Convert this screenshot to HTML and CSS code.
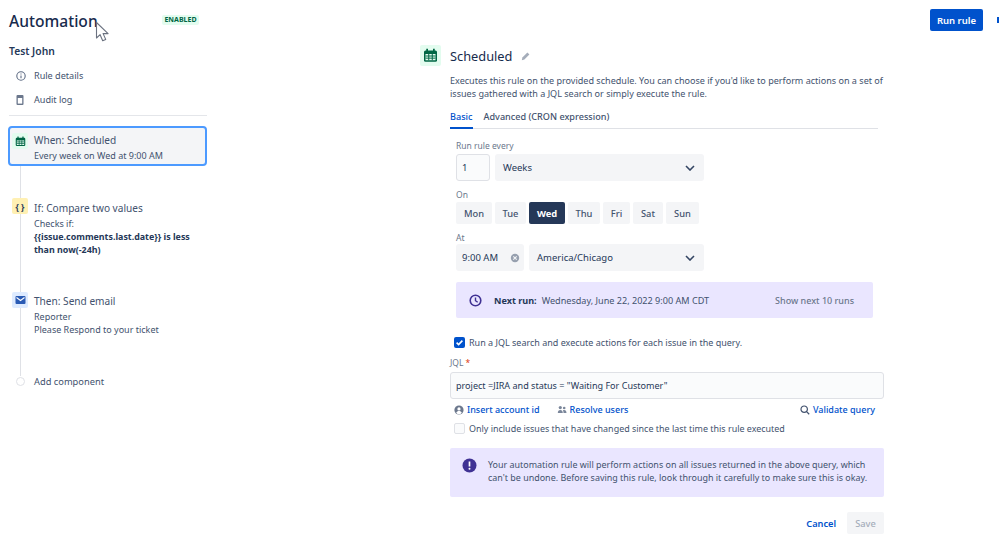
FILE: index.html
```html
<!DOCTYPE html>
<html lang="en">
<head>
<meta charset="utf-8">
<title>Automation</title>
<link rel="stylesheet" href="styles.css">
</head>
<body>
<div class="page">
  <header class="topbar">
    <h1 class="title">Automation</h1>
    <span class="lozenge">ENABLED</span>
    <button class="btn-primary">Run rule</button>
    <span class="edge-mark"></span>
  </header>
  <svg class="cursor" width="16" height="22" viewBox="0 0 16 22"><path d="M1.500 1.500V17l3.600-3.300 2.600 6 3-1.300-2.600-5.800h5z" fill="#fff" stroke="#6b7280" stroke-width="1.100" stroke-linejoin="round"/></svg>
  <div class="content">
    <aside class="sidebar">
      <div class="owner">Test John</div>
      <div class="nav-item">
        <svg class="nav-icon" width="12" height="12" viewBox="0 0 12 12"><circle cx="6" cy="6" r="4.200" fill="none" stroke="#5e6c84" stroke-width="1.100"/><path d="M6 5.400v2.800M6 3.500v1" stroke="#5e6c84" stroke-width="1.100"/></svg>
        Rule details
      </div>
      <div class="nav-item">
        <svg class="nav-icon" width="12" height="12" viewBox="0 0 12 12"><rect x="1.500" y="1" width="7" height="10" rx="1" fill="#6b778c"/><rect x="2.800" y="4" width="4.400" height="5.600" fill="#fff"/></svg>
        Audit log
      </div>
      <hr class="divider">
      <div class="flow">
        <div class="flow-line"></div>
        <div class="step step-selected">
          <span class="step-icon icon-green">
            <svg width="11" height="11" viewBox="0 0 12 12"><use href="#cal"/></svg>
          </span>
          <div class="step-body">
            <div class="step-title">When: Scheduled</div>
            <div class="step-text">Every week on Wed at 9:00 AM</div>
          </div>
        </div>
        <div class="step step-if">
          <span class="step-icon icon-yellow">{ }</span>
          <div class="step-body">
            <div class="step-title">If: Compare two values</div>
            <div class="step-text">Checks if:<br><b>{{issue.comments.last.date}} is less than now(-24h)</b></div>
          </div>
        </div>
        <div class="step step-then">
          <span class="step-icon icon-blue">
            <svg width="11" height="10" viewBox="0 0 11 10"><rect x=".5" y="1" width="10" height="8" rx="1" fill="#2a5bb5"/><path d="M1.500 2.500l4 3 4-3" fill="none" stroke="#fff" stroke-width="1.100"/></svg>
          </span>
          <div class="step-body">
            <div class="step-title">Then: Send email</div>
            <div class="step-text">Reporter<br>Please Respond to your ticket</div>
          </div>
        </div>
        <div class="step step-add">
          <span class="add-dot"></span>
          <div class="add-label">Add component</div>
        </div>
      </div>
    </aside>

    <main class="panel">
      <div class="panel-head">
        <span class="panel-icon">
          <svg width="15" height="15" viewBox="0 0 12 12"><defs><g id="cal"><rect x=".8" y="2" width="10.400" height="9" rx="1.200" fill="#006644"/><rect x="2.600" y=".6" width="1.400" height="2.400" fill="#006644"/><rect x="8" y=".6" width="1.400" height="2.400" fill="#006644"/><rect x="2" y="4.800" width="8" height="5" fill="#e3fcef"/><path d="M2 6.400h8M2 8.100h8M4.600 4.800v5M7.400 4.800v5" stroke="#006644" stroke-width=".8"/></g></defs><use href="#cal"/></svg>
        </span>
        <h2 class="panel-title">Scheduled</h2>
        <svg class="pencil" width="10" height="10" viewBox="0 0 10 10"><path d="M.8 9.200l.6-2.600 5-5 2 2-5 5z" fill="#a5adba"/></svg>
      </div>
      <div class="panel-body">
        <p class="desc">Executes this rule on the provided schedule. You can choose if you'd like to perform actions on a set of issues gathered with a JQL search or simply execute the rule.</p>
        <nav class="tabs">
          <span class="tab tab-active">Basic</span>
          <span class="tab">Advanced (CRON expression)</span>
        </nav>
        <section class="schedule">
          <label class="field-label">Run rule every</label>
          <div class="row">
            <div class="input num">1</div>
            <div class="select weeks">Weeks<svg class="chev" width="10" height="6" viewBox="0 0 10 6"><path d="M1 1l4 4 4-4" fill="none" stroke="#344563" stroke-width="1.600"/></svg></div>
          </div>
          <label class="field-label label-on">On</label>
          <div class="days">
            <span class="day d-mon">Mon</span>
            <span class="day d-tue">Tue</span>
            <span class="day day-on d-wed">Wed</span>
            <span class="day d-thu">Thu</span>
            <span class="day d-fri">Fri</span>
            <span class="day d-sat">Sat</span>
            <span class="day d-sun">Sun</span>
          </div>
          <label class="field-label label-at">At</label>
          <div class="row">
            <div class="select time">9:00 AM<svg class="clear" width="10" height="10" viewBox="0 0 10 10"><circle cx="5" cy="5" r="4.200" fill="#97a0af"/><path d="M3.300 3.300l3.400 3.400M6.700 3.300L3.300 6.700" stroke="#f4f5f7" stroke-width="1.100"/></svg></div>
            <div class="select zone">America/Chicago<svg class="chev" width="10" height="6" viewBox="0 0 10 6"><path d="M1 1l4 4 4-4" fill="none" stroke="#344563" stroke-width="1.600"/></svg></div>
          </div>
          <div class="next-run">
            <svg class="clock" width="13" height="13" viewBox="0 0 13 13"><circle cx="6.500" cy="6.500" r="5.300" fill="none" stroke="#403294" stroke-width="1.600"/><path d="M6.500 3.500v3.200l2.200 1.600" fill="none" stroke="#403294" stroke-width="1.400"/></svg>
            <b class="next-label">Next run:</b>
            <span class="next-date">Wednesday, June 22, 2022 9:00 AM CDT</span>
            <span class="next-more">Show next 10 runs</span>
          </div>
        </section>
        <div class="check-row check-jql">
          <span class="check check-on"><svg width="11" height="11" viewBox="0 0 11 11"><path d="M2.600 5.600l2 2 3.800-4" fill="none" stroke="#fff" stroke-width="1.600"/></svg></span>
          Run a JQL search and execute actions for each issue in the query.
        </div>
        <label class="jql-label">JQL<span class="req">*</span></label>
        <div class="jql-input">project =JIRA and status = "Waiting For Customer"</div>
        <div class="links">
          <a class="link"><svg width="10" height="10" viewBox="0 0 10 10"><circle cx="5" cy="5" r="4.600" fill="#6b778c"/><circle cx="5" cy="3.900" r="1.600" fill="#fff"/><path d="M2.200 8c.5-1.500 1.500-2 2.800-2s2.300.5 2.800 2A4 4 0 0 1 2.200 8z" fill="#fff"/></svg>Insert account id</a>
          <a class="link link-resolve"><svg width="10" height="9" viewBox="0 0 10 9"><circle cx="3.300" cy="2.600" r="1.600" fill="#7a869a"/><circle cx="7.200" cy="3" r="1.300" fill="#7a869a"/><path d="M.8 8c0-2 1-3 2.500-3s2.500 1 2.500 3zM6.500 8c0-1.300-.2-2-.6-2.700.4-.3.9-.4 1.300-.4 1.400 0 2.300 1 2.300 3.100z" fill="#7a869a"/></svg>Resolve users</a>
          <a class="link link-validate"><svg width="10" height="10" viewBox="0 0 10 10"><circle cx="4.200" cy="4.200" r="3.200" fill="none" stroke="#42526e" stroke-width="1.200"/><path d="M6.600 6.600l2.600 2.600" stroke="#42526e" stroke-width="1.300"/></svg>Validate query</a>
        </div>
        <div class="check-row check-changed">
          <span class="check"></span>
          Only include issues that have changed since the last time this rule executed
        </div>
        <div class="warning">
          <svg class="warn-icon" width="15" height="15" viewBox="0 0 15 15"><circle cx="7.500" cy="7.500" r="7" fill="#403294"/><path d="M7.500 3.500v5" stroke="#fff" stroke-width="1.700"/><circle cx="7.500" cy="10.800" r="1" fill="#fff"/></svg>
          <p class="warn-text">Your automation rule will perform actions on all issues returned in the above query, which can't be undone. Before saving this rule, look through it carefully to make sure this is okay.</p>
        </div>
        <div class="actions">
          <a class="cancel">Cancel</a>
          <button class="save" disabled>Save</button>
        </div>
      </div>
    </main>
  </div>
</div>
</body>
</html>
```
FILE: styles.css
```css
* { box-sizing: border-box; }
html, body { margin: 0; height: 100%; overflow: hidden; background: #fff; }
body { font-family: "Noto Sans", "Open Sans", sans-serif; font-size: 9.5px; color: #42526e; }
.page { position: relative; width: 999px; height: 554px; overflow: hidden; }
p, h1, h2 { margin: 0; font-weight: 400; }

.topbar { display: flex; align-items: center; height: 40px; padding: 0 0 0 9px; }
.title { font-size: 15.600px; font-weight: 500; color: #172b4d; width: 153px; line-height: 24px; margin-top: 2px; }
.lozenge { width: 37px; height: 10px; border-radius: 2px; background: #e3fcef; color: #006644; font-size: 7px; font-weight: 700; line-height: 10px; text-align: center; }
.btn-primary { margin-left: auto; width: 53px; height: 22px; padding: 0; border: 0; border-radius: 2px; background: #0052cc; color: #fff; font: 600 9.500px "Noto Sans", sans-serif; }
.edge-mark { width: 2px; height: 6px; margin-left: 14px; background: #0052cc; }
.cursor { position: absolute; left: 95px; top: 21px; }

.content { display: flex; }
.sidebar { width: 207px; margin-left: 8px; flex: none; }
.owner { padding: 5px 0 0 1px; height: 24px; color: #253858; font-size: 10.300px; font-weight: 600; line-height: 13px; }
.nav-item { display: flex; align-items: center; height: 24px; padding-left: 7px; line-height: 24px; font-size: 9.100px; }
.nav-icon { margin-right: 7px; flex: none; }
.divider { height: 1px; margin: 3px 0 10px 1px; width: 198px; border: 0; background: #e4e6ea; }

.flow { position: relative; width: 199px; }
.flow-line { position: absolute; left: 12px; top: 20px; width: 1px; height: 230px; background: #dfe1e6; }
.step { position: relative; display: flex; padding-left: 4px; }
.step-selected { height: 40px; border: 2px solid #4c9aff; border-radius: 4px; background: #f4f5f7; padding: 5px 0 0 2px; }
.step-if { margin-top: 32px; height: 94px; }
.step-then { height: 81px; }
.step-add { align-items: center; height: 16px; padding-left: 8px; }
.step-icon { display: flex; align-items: center; justify-content: center; width: 16px; height: 16px; flex: none; border-radius: 2px; margin-right: 6px; color: #253858; font-size: 8.500px; font-weight: 700; }
.icon-green { background: #e3fcef; }
.icon-yellow { background: #fff0b3; }
.icon-blue { background: #deebff; }
.step-title { font-size: 10.100px; line-height: 13px; margin-bottom: 2px; padding-top: 1px; }
.step-if .step-title { padding-top: 4px; }
.step-then .step-title { padding-top: 3px; }
.step-text { font-size: 9px; line-height: 13px; width: 165px; }
.step-text b { color: #253858; font-size: 8.900px; font-weight: 700; }
.add-dot { width: 9px; height: 9px; margin-right: 9px; border: 1px solid #dfe1e6; border-radius: 50%; background: #fff; flex: none; }
.add-label { font-size: 9.300px; }

.panel { width: 464px; margin-left: 205px; flex: none; margin-top: 5px; }
.panel-head { display: flex; align-items: center; height: 21px; }
.panel-icon { display: flex; align-items: center; justify-content: center; width: 21px; height: 21px; border-radius: 2px; background: #e3fcef; margin-right: 9px; }
.panel-title { font-size: 12.800px; color: #172b4d; line-height: 21px; padding-top: 1px; }
.pencil { margin-left: 9px; }
.panel-body { padding-left: 30px; }
.desc { margin-top: 8px; font-size: 9.050px; line-height: 13px; }
.tabs { display: flex; width: 428px; height: 21px; margin-top: 8px; border-bottom: 1px solid #dfe1e6; gap: 11px; }
.tab { height: 21px; font-size: 9.100px; font-weight: 500; line-height: 17px; }
.tab-active { color: #0052cc; border-bottom: 2px solid #0052cc; }
.schedule { padding: 11px 0 0 6px; }
.field-label { display: block; font-size: 8.500px; line-height: 12px; color: #6b778c; }
.row { display: flex; gap: 5px; margin-top: 2px; }
.input, .select { display: flex; align-items: center; height: 27px; border-radius: 3px; font-size: 9.500px; color: #253858; }
.input { width: 34px; padding-left: 5px; border: 1.500px solid #dfe1e6; background: #fafbfc; }
.select { justify-content: space-between; background: #f4f5f7; padding: 0 9px 0 8px; }
.weeks { width: 209px; }
.time { width: 68px; padding: 0 4px 0 6px; }
.zone { width: 175px; }
.label-on { margin-top: 8px; }
.days { display: flex; gap: 3px; margin-top: 1px; width: 243px; }
.day { display: flex; align-items: center; justify-content: center; height: 22px; border-radius: 2px; background: #f4f5f7; font-size: 9.300px; font-weight: 500; color: #42526e; }
.d-mon { width: 36px; }
.d-tue { width: 31px; }
.d-wed { width: 36px; }
.d-thu { width: 32px; }
.d-fri { width: 27px; }
.d-sat { width: 30px; }
.d-sun { width: 33px; }
.day-on { background: #253858; color: #fff; font-weight: 700; }
.label-at { margin-top: 8px; }
.label-at + .row { margin-top: 0; }
.next-run { display: flex; align-items: center; width: 417px; height: 36px; margin-top: 11px; padding: 0 19px 0 13px; border-radius: 2px; background: #eae6ff; font-size: 9.100px; }
.clock { margin-right: 12px; }
.next-label { color: #253858; margin-right: 5px; }
.next-more { margin-left: auto; color: #6b778c; font-weight: 500; font-size: 9px; }
.check-row { display: flex; align-items: center; font-size: 9px; }
.check { display: flex; width: 11px; height: 11px; flex: none; border-radius: 2px; border: 1px solid #dfe1e6; background: #fafbfc; margin-right: 4px; }
.check-on { border: 0; background: #0052cc; }
.check-jql { padding-left: 4px; height: 12px; margin-top: 18px; }
.jql-label { display: block; margin-top: 9px; height: 12px; font-size: 8.500px; line-height: 12px; color: #6b778c; }
.req { color: #de350b; margin-left: 2px; }
.jql-input { display: flex; align-items: center; width: 434px; height: 27px; margin-top: 3px; padding-left: 5px; border: 1.500px solid #dfe1e6; border-radius: 3px; background: #fafbfc; font-size: 9.050px; color: #253858; }
.links { display: flex; align-items: center; width: 425px; height: 13px; margin-top: 4px; padding-left: 4px; }
.link { display: flex; align-items: center; gap: 3px; color: #0052cc; font-size: 9px; font-weight: 500; }
.link-resolve { margin-left: 17px; }
.link-validate { margin-left: auto; }
.check-changed { padding-left: 4px; height: 12px; margin-top: 6px; font-size: 8.950px; }
.warning { display: flex; width: 434px; height: 49px; margin-top: 14px; padding: 10px 12px 0 12px; border-radius: 2px; background: #eae6ff; }
.warn-icon { flex: none; margin-right: 11px; }
.warn-text { font-size: 8.950px; line-height: 13px; }
.actions { display: flex; align-items: center; justify-content: flex-end; width: 434px; margin-top: 15px; }
.cancel { color: #0052cc; font-size: 9.200px; font-weight: 600; margin-right: 11px; }
.save { width: 37px; height: 22px; padding: 0; border: 0; border-radius: 2px; background: #f4f5f7; color: #a5adba; font: 500 9.300px "Noto Sans", sans-serif; }
```
